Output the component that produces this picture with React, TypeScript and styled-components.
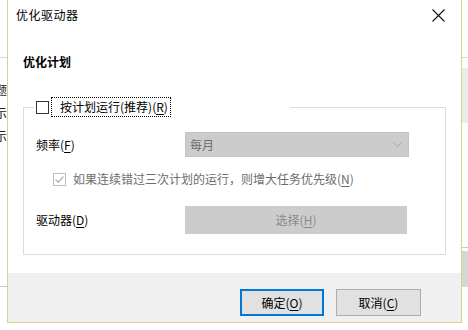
import styled, { createGlobalStyle } from 'styled-components'

const GlobalStyle = createGlobalStyle`
  html, body {
    margin: 0;
    padding: 0;
    background: #ffffff;
  }
  body {
    font-family: "Noto Sans CJK SC", "Noto Sans", sans-serif;
    font-size: 12px;
    color: #000000;
  }
`

const Desktop = styled.div`
  position: relative;
  width: 468px;
  height: 330px;
  overflow: hidden;
  background: #ffffff;
  display: flex;
  justify-content: space-between;
`

const Pane = styled.div<{ $w: number }>`
  width: ${(p) => p.$w}px;
  display: flex;
  flex-direction: column;
  overflow: hidden;
`

const PaneHeader = styled.div`
  height: 57px;
  flex-shrink: 0;
  border-bottom: 1px solid #d6d6d6;
`

const Spacer = styled.div<{ $h: number }>`
  height: ${(p) => p.$h}px;
  flex-shrink: 0;
`

const CutRow = styled.div`
  height: 23px;
  display: flex;
  justify-content: flex-end;
  align-items: center;
  white-space: nowrap;
  color: #222;
  font-size: 12px;
  line-height: 16px;
`

const Rule = styled.div`
  height: 1px;
  flex-shrink: 0;
  background: #c8c8c8;
`

const Shade = styled.div<{ $h: number; $c: string }>`
  height: ${(p) => p.$h}px;
  flex-shrink: 0;
  background: ${(p) => p.$c};
`

const Dialog = styled.div`
  position: absolute;
  left: 7px;
  top: -1px;
  width: 455px;
  height: 324px;
  box-sizing: border-box;
  border: 1px solid #ddd183;
  background: #ffffff;
  display: flex;
  flex-direction: column;
`

const TitleBar = styled.div`
  height: 30px;
  flex-shrink: 0;
  display: flex;
  align-items: center;
  justify-content: space-between;
  padding-left: 8px;
`

const Title = styled.div`
  font-size: 12px;
  line-height: 16px;
  letter-spacing: 0.5px;
  color: #000;
`

const CloseBox = styled.div`
  width: 46px;
  height: 30px;
  display: flex;
  align-items: center;
  justify-content: center;
`

const Body = styled.div`
  flex: 1;
  padding: 24px 15px 0;
  display: flex;
  flex-direction: column;
`

const Heading = styled.div`
  font-weight: 700;
  font-size: 12px;
  line-height: 16px;
`

const Group = styled.fieldset`
  margin: 27px 0 0;
  width: 423px;
  box-sizing: border-box;
  border: 1px solid #dcdcdc;
  padding: 15px 36px 20px 12px;
  display: flex;
  flex-direction: column;
`

const Legend = styled.legend`
  margin-left: -2px;
  width: 256px;
  padding: 0;
  display: flex;
  align-items: center;
  height: 20px;
`

const Box = styled.span<{ $disabled?: boolean; $inset?: number }>`
  width: 13px;
  height: 13px;
  margin-left: ${(p) => p.$inset ?? 0}px;
  box-sizing: border-box;
  border: 1px solid ${(p) => (p.$disabled ? '#bcbcbc' : '#333333')};
  background: #ffffff;
  display: flex;
  align-items: center;
  justify-content: center;
  flex-shrink: 0;
`

const FocusLabel = styled.span`
  margin-left: 2px;
  padding: 1px 2px 1px 8px;
  border: 1px dotted #000;
  line-height: 16px;
  white-space: nowrap;
`

const Row = styled.div<{ $top: number }>`
  display: flex;
  align-items: center;
  margin-top: ${(p) => p.$top}px;
`

const FieldLabel = styled.div`
  width: 149px;
  flex-shrink: 0;
  line-height: 16px;
  white-space: nowrap;
`

const Combo = styled.div`
  width: 224px;
  height: 25px;
  box-sizing: border-box;
  background: #cccccc;
  border: 1px solid #c4c4c4;
  display: flex;
  align-items: center;
  justify-content: space-between;
  padding: 0 6px 0 4px;
  color: #6d6d6d;
  line-height: 16px;
`

const CheckRow = styled.div`
  display: flex;
  align-items: center;
  margin-top: 14px;
  padding-left: 17px;
  gap: 7px;
  color: #6d6d6d;
  line-height: 16px;
  white-space: nowrap;
`

const WideButton = styled.div`
  width: 222px;
  height: 28px;
  box-sizing: border-box;
  background: #cccccc;
  border: 1px solid #cccccc;
  display: flex;
  align-items: center;
  justify-content: center;
  color: #8a8a8a;
  line-height: 16px;
`

const Footer = styled.div`
  height: 49px;
  flex-shrink: 0;
  background: #f0f0f0;
  display: flex;
  justify-content: flex-end;
  align-items: flex-start;
  padding: 16px 40px 0 0;
  box-sizing: border-box;
  gap: 12px;
`

const Button = styled.div<{ $primary?: boolean }>`
  width: ${(p) => (p.$primary ? 84 : 85)}px;
  height: 27px;
  box-sizing: border-box;
  background: #e1e1e1;
  border: ${(p) => (p.$primary ? '2px solid #0078d7' : '1px solid #adadad')};
  display: flex;
  align-items: center;
  justify-content: center;
  line-height: 16px;
`

const U = styled.span`
  text-decoration: underline;
  text-underline-offset: 2px;
`

const Key = ({ k }: { k: string }) => (
  <>
    (<U>{k}</U>)
  </>
)

const App = () => (
  <>
    <GlobalStyle />
    <Desktop>
      <Pane $w={7}>
        <PaneHeader />
        <Spacer $h={20} />
        <CutRow>标题</CutRow>
        <CutRow>显示</CutRow>
        <CutRow>显示</CutRow>
        <Spacer $h={139} />
        <Rule />
      </Pane>
      <Pane $w={6}>
        <PaneHeader />
        <Spacer $h={10} />
        <Shade $h={55} $c="#ebebeb" />
        <Spacer $h={124} />
        <Rule />
        <Spacer $h={3} />
        <Shade $h={36} $c="#d6d6d6" />
      </Pane>

      <Dialog>
        <TitleBar>
          <Title>优化驱动器</Title>
          <CloseBox>
            <svg width="13" height="13" viewBox="0 0 13 13">
              <path d="M0.5 0.5 L12.5 12.5 M12.5 0.5 L0.5 12.5" stroke="#111" strokeWidth="1.1" fill="none" />
            </svg>
          </CloseBox>
        </TitleBar>
        <Body>
          <Heading>优化计划</Heading>
          <Group>
            <Legend>
              <Box $inset={2} />
              <FocusLabel>
                按计划运行(推荐)<Key k="R" />
              </FocusLabel>
            </Legend>
            <Row $top={0}>
              <FieldLabel>
                频率<Key k="F" />
              </FieldLabel>
              <Combo>
                <span>每月</span>
                <svg width="9" height="5" viewBox="0 0 9 5">
                  <path d="M0.5 0.5 L4.5 4.5 L8.5 0.5" stroke="#a8a8a8" strokeWidth="1" fill="none" />
                </svg>
              </Combo>
            </Row>
            <CheckRow>
              <Box $disabled>
                <svg width="11" height="11" viewBox="0 0 11 11">
                  <path d="M1.5 5.5 L4.2 8.2 L9.5 2.5" stroke="#b4b4b4" strokeWidth="1.3" fill="none" />
                </svg>
              </Box>
              <span>
                如果连续错过三次计划的运行，则增大任务优先级<Key k="N" />
              </span>
            </CheckRow>
            <Row $top={19}>
              <FieldLabel>
                驱动器<Key k="D" />
              </FieldLabel>
              <WideButton>
                选择<Key k="H" />
              </WideButton>
            </Row>
          </Group>
        </Body>
        <Footer>
          <Button $primary>
            确定<Key k="O" />
          </Button>
          <Button>
            取消<Key k="C" />
          </Button>
        </Footer>
      </Dialog>
    </Desktop>
  </>
)

export default App
